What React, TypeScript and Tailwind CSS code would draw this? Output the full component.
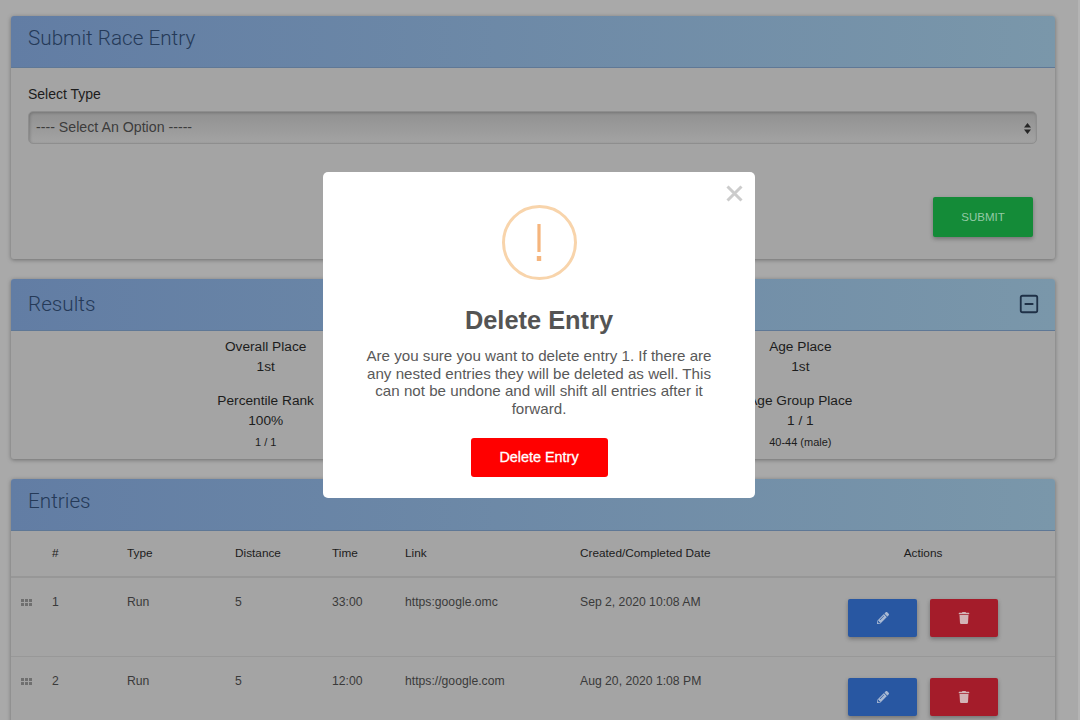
import React from 'react';
import { FaPencilAlt, FaTrash } from 'react-icons/fa';
import { SquareMinus } from 'lucide-react';

const rowCols = 'grid grid-cols-[41px_75px_108px_97px_73px_175px_221px_244px]';

const entries = [
  { id: 1, type: 'Run', distance: '5', time: '33:00', link: 'https:google.omc', date: 'Sep 2, 2020 10:08 AM' },
  { id: 2, type: 'Run', distance: '5', time: '12:00', link: 'https://google.com', date: 'Aug 20, 2020 1:08 PM' },
];

function CardHeader({ title, raised, children }: { title: string; raised?: boolean; children?: React.ReactNode }) {
  return (
    <div className="flex h-[52px] items-center justify-between rounded-t-[3px] border-b border-[#5f7896] bg-gradient-to-r from-[#627da4] to-[#7a97aa] px-[17px]">
      <h2 className={`font-['Roboto',sans-serif] text-[20.7px] font-light text-[#253a58] ${raised ? 'pb-[6px]' : ''}`}>{title}</h2>
      {children}
    </div>
  );
}

function Grip() {
  return (
    <svg width="11" height="7" viewBox="0 0 11 7" fill="#6f6f6f">
      <rect x="0" y="0" width="3" height="3" />
      <rect x="4" y="0" width="3" height="3" />
      <rect x="8" y="0" width="3" height="3" />
      <rect x="0" y="4" width="3" height="3" />
      <rect x="4" y="4" width="3" height="3" />
      <rect x="8" y="4" width="3" height="3" />
    </svg>
  );
}

function Stat({ label, value, sub }: { label: string; value: string; sub?: string }) {
  return (
    <div className="flex flex-col items-center">
      <div className="h-5 text-[13.7px] leading-5">{label}</div>
      <div className="h-5 text-[13.7px] leading-5">{value}</div>
      {sub && <div className="mt-[2px] text-[11px] leading-[18px]">{sub}</div>}
    </div>
  );
}

export default function App() {
  return (
    <div className="relative h-[720px] w-[1080px] overflow-hidden bg-[#a9a9a9] font-['Liberation_Sans',sans-serif] text-[#1c1c1c]">
      <div className="flex flex-col gap-5 pl-[11px] pt-4">
        <section className="h-[243px] w-[1044px] rounded-[3px] bg-[#a4a4a4] shadow-[0_1px_4px_rgba(0,0,0,0.35)]">
          <CardHeader title="Submit Race Entry" raised />
          <div className="flex flex-col px-[17px] pt-[18px]">
            <label className="h-[25px] text-sm leading-4">Select Type</label>
            <div className="flex h-[33px] w-[1009px] items-center justify-between rounded-[5px] border border-[#8e8e8e] bg-gradient-to-b from-[#919191] to-[#a3a3a3] pl-[7px] pr-[5px] pt-[1px] text-[14.2px] text-[#3c3c3c] shadow-[inset_1px_1px_3px_rgba(0,0,0,0.2)]">
              <span>---- Select An Option -----</span>
              <svg width="7" height="11" viewBox="0 0 7 11" fill="#262626">
                <path d="M3.5 0 L7 4.6 L0 4.6 Z M3.5 11 L0 6.4 L7 6.4 Z" />
              </svg>
            </div>
            <div className="mt-[53px] flex w-[1005px] justify-end">
              <button className="h-10 w-[100px] rounded-[2px] bg-[#148b38] pt-[1px] text-[11.5px] text-[#93c9a5] shadow-[0_2px_4px_rgba(0,0,0,0.3)]">
                SUBMIT
              </button>
            </div>
          </div>
        </section>

        <section className="h-[180px] w-[1044px] rounded-[3px] bg-[#a4a4a4] shadow-[0_1px_4px_rgba(0,0,0,0.35)]">
          <CardHeader title="Results">
            <SquareMinus size={22} strokeWidth={2} className="-mr-[2px] -mt-[2px] text-[#1f3147]" />
          </CardHeader>
          <div className="mx-auto grid w-[802px] grid-cols-3 gap-y-[14px] pt-[6px]">
            <Stat label="Overall Place" value="1st" />
            <div />
            <Stat label="Age Place" value="1st" />
            <Stat label="Percentile Rank" value="100%" sub="1 / 1" />
            <div />
            <Stat label="Age Group Place" value="1 / 1" sub="40-44 (male)" />
          </div>
        </section>

        <section className="w-[1044px] rounded-[3px] bg-[#a4a4a4] shadow-[0_1px_4px_rgba(0,0,0,0.35)]">
          <CardHeader title="Entries" raised />
          <div className={`${rowCols} h-[47px] items-center border-b-2 border-[#979797] pt-[1px] text-[11.8px]`}>
            <div />
            <div>#</div>
            <div>Type</div>
            <div>Distance</div>
            <div>Time</div>
            <div>Link</div>
            <div>Created/Completed Date</div>
            <div className="text-center">Actions</div>
          </div>
          {entries.map((entry) => (
            <div key={entry.id} className={`${rowCols} h-[78.6px] border-b border-[#989898] pt-4 text-[12.2px] leading-4 text-[#3a3a3a]`}>
              <div className="pl-[10px] pt-[5px]">
                <Grip />
              </div>
              <div>{entry.id}</div>
              <div>{entry.type}</div>
              <div>{entry.distance}</div>
              <div>{entry.time}</div>
              <div>{entry.link}</div>
              <div>{entry.date}</div>
              <div className="mt-[5px] flex justify-center gap-[13px]">
                <button className="flex h-[38px] w-[69px] items-center justify-center rounded-[2px] bg-[#2857a2] text-[#a9b9d3] shadow-[0_2px_4px_rgba(0,0,0,0.3)]">
                  <FaPencilAlt size={12} />
                </button>
                <button className="flex h-[38px] w-[68px] items-center justify-center rounded-[2px] bg-[#a41c2a] text-[#d3b3b6] shadow-[0_2px_4px_rgba(0,0,0,0.3)]">
                  <FaTrash size={12} />
                </button>
              </div>
            </div>
          ))}
        </section>
      </div>

      {/* scrollbar edge */}
      <div className="absolute inset-y-0 right-0 w-[2px] bg-[#b4b4b4]" />

      {/* delete confirm modal */}
      <div className="absolute left-[323px] top-[172px] flex h-[326px] w-[432px] flex-col items-center rounded-[5px] bg-white pt-[33px] text-[#595959]">
        <button className="absolute right-[12px] top-[13px] text-[#cccccc]">
          <svg width="17" height="17" viewBox="0 0 17 17" stroke="currentColor" strokeWidth="3" fill="none">
            <path d="M1.5 1.5 L15.5 15.5 M15.5 1.5 L1.5 15.5" />
          </svg>
        </button>
        <div className="flex h-[75px] w-[75px] items-center justify-center rounded-full border-[3px] border-[#f8d4ab]">
          <svg width="6" height="38" viewBox="0 0 6 38" fill="#f5b57d">
            <rect x="1.4" y="0" width="3.2" height="28" />
            <rect x="0.8" y="32" width="4.4" height="5" />
          </svg>
        </div>
        <h2 className="mt-[23px] text-[25.4px] font-bold leading-[34px] text-[#545454]">Delete Entry</h2>
        <p className="mt-[10px] w-[360px] text-center text-[15.15px] leading-[17.6px]">
          Are you sure you want to delete entry 1. If there are any nested entries they will be deleted as well. This
          can not be undone and will shift all entries after it forward.
        </p>
        <button className="mt-[21px] h-[39px] w-[137px] rounded-[3px] bg-[#ff0000] text-[14.4px] text-white [-webkit-text-stroke:0.3px_white]">
          Delete Entry
        </button>
      </div>
    </div>
  );
}
